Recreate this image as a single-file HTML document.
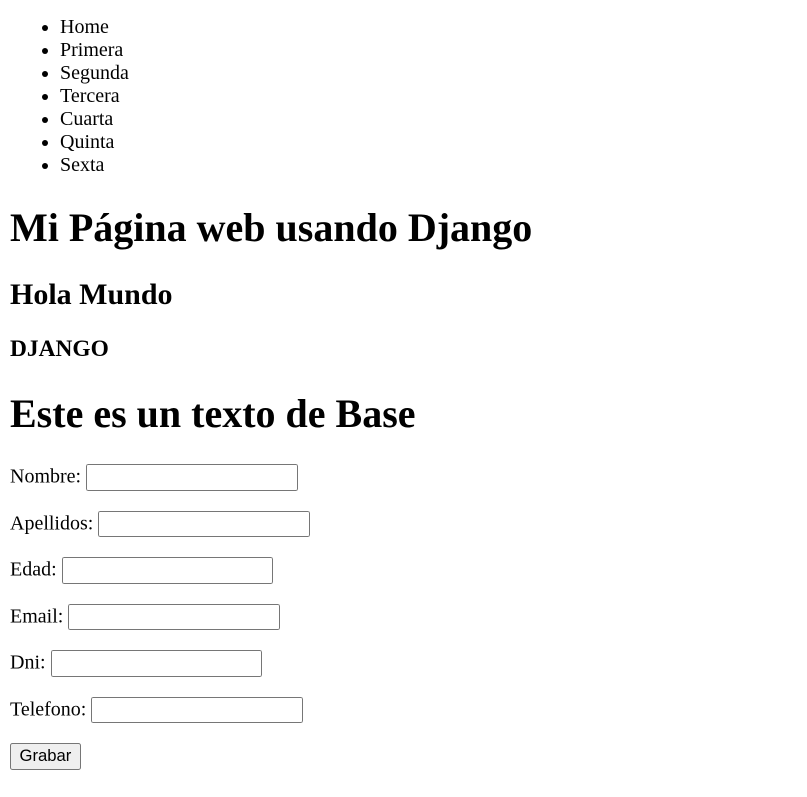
<!DOCTYPE html>
<html>
<head>
<meta charset="utf-8">
<style>
html{zoom:1.25;}
body{font-family:"Liberation Serif",serif;margin:8px;background:#fff;color:#000;}
ul{margin-top:12.8px;}
input{width:162px;box-sizing:content-box;}
input,button{font-family:"Liberation Sans",Arial,sans-serif;}
</style>
</head>
<body>
<ul>
<li>Home</li>
<li>Primera</li>
<li>Segunda</li>
<li>Tercera</li>
<li>Cuarta</li>
<li>Quinta</li>
<li>Sexta</li>
</ul>
<h1>Mi Página web usando Django</h1>
<h2>Hola Mundo</h2>
<h3>DJANGO</h3>
<h1>Este es un texto de Base</h1>
<form>
<p>Nombre: <input type="text"></p>
<p>Apellidos: <input type="text"></p>
<p>Edad: <input type="text"></p>
<p>Email: <input type="text"></p>
<p>Dni: <input type="text"></p>
<p>Telefono: <input type="text"></p>
<button type="button">Grabar</button>
</form>
</body>
</html>
